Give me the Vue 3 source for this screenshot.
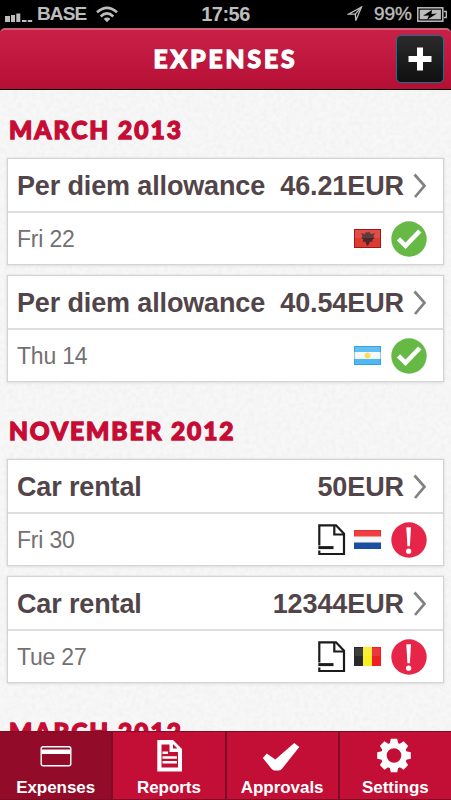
<script setup>
const groups = [
  {
    title: 'MARCH 2013',
    cls: 'march',
    items: [
      { name: 'Per diem allowance', amount: '46.21EUR', date: 'Fri 22', flag: 'al', ok: true },
      { name: 'Per diem allowance', amount: '40.54EUR', date: 'Thu 14', flag: 'ar', ok: true },
    ],
  },
  {
    title: 'NOVEMBER 2012',
    cls: 'november',
    items: [
      { name: 'Car rental', amount: '50EUR', date: 'Fri 30', flag: 'nl', ok: false },
      { name: 'Car rental', amount: '12344EUR', date: 'Tue 27', flag: 'be', ok: false },
    ],
  },
  { title: 'MARCH 2012', cls: 'march', items: [] },
]
const tabs = ['Expenses', 'Reports', 'Approvals', 'Settings']
</script>

<template>
  <div class="screen">
    <div class="status">
      <div class="side">
        <svg class="signal" width="28" height="12" viewBox="0 0 28 12" fill="#bdbdbd">
          <rect x="0" y="5" width="5" height="6" /><rect x="6" y="4" width="4" height="7" />
          <rect x="11.300" y="2.500" width="4" height="8.500" /><rect x="17" y="9" width="4.500" height="2" />
          <rect x="22.700" y="9" width="4.500" height="2" />
        </svg>
        <span class="carrier">BASE</span>
        <svg class="wifi" width="22" height="17" viewBox="0 0 22 17" fill="none" stroke="#bdbdbd" stroke-width="2.700">
          <path d="M1 6.300Q11 -2.700 21 6.300" /><path d="M4.700 10.400Q11 4.500 17.300 10.400" />
          <path d="M7.600 12.800Q11 10 14.400 12.800L11 16.300Z" fill="#bdbdbd" stroke="none" />
        </svg>
      </div>
      <span class="clock">17:56</span>
      <div class="side right">
        <svg class="arrow" width="16" height="16" viewBox="0 0 16 16" fill="none" stroke="#bdbdbd" stroke-width="1.300">
          <path d="M14.500 1L1.500 8.200H8.300L8.800 14.600Z" /><path d="M8.300 8.200L14.500 1" />
        </svg>
        <span class="percent">99%</span>
        <svg class="battery" width="30" height="15" viewBox="0 0 30 15">
          <rect x=".8" y=".8" width="25" height="13.400" fill="none" stroke="#bdbdbd" stroke-width="1.500" />
          <rect x="2.700" y="2.700" width="21.200" height="9.600" fill="#bdbdbd" />
          <path d="M27 4.500H29.300V10.500H27" fill="none" stroke="#bdbdbd" stroke-width="1.300" />
          <path d="M15 3L6 8.800L12 8.500L10 12.700L20 6.500L14.500 7Z" fill="#000" />
        </svg>
      </div>
    </div>

    <header class="header">
      <h1><span>EXPENSES</span></h1>
      <button class="add" aria-label="Add">
        <svg width="24" height="24" viewBox="0 0 24 24"><path d="M9 0.500H15V9H23.500V15H15V23.500H9V15H0.500V9H9Z" fill="#fff" /></svg>
      </button>
    </header>

    <main class="content">
      <svg class="paper" width="451" height="641">
        <filter id="grain" x="0" y="0" width="100%" height="100%">
          <feTurbulence type="fractalNoise" baseFrequency="0.22" numOctaves="2" seed="4" />
          <feColorMatrix values="0 0 0 0 0  0 0 0 0 0  0 0 0 0 0  0.200 0 0 0 -0.060" />
        </filter>
        <rect width="451" height="641" filter="url(#grain)" opacity=".22" />
      </svg>
      <section v-for="(g, gi) in groups" :key="gi" class="group">
        <h2><span :class="g.cls">{{ g.title }}</span></h2>
        <article v-for="(it, i) in g.items" :key="i" class="card">
          <div class="top">
            <span class="name">{{ it.name }}</span>
            <span class="amount">{{ it.amount }}</span>
            <svg class="chev" width="14" height="26" viewBox="0 0 14 26"><path d="M1.500 1.500L11.500 12.800L2 24" fill="none" stroke="#818182" stroke-width="2.700" /></svg>
          </div>
          <div class="bottom">
            <span class="date">{{ it.date }}</span>
            <svg v-if="!it.ok" class="doc" width="28" height="32" viewBox="0 0 28 32" fill="none" stroke="#1c1a1b" stroke-width="2.200">
              <path d="M1.300 21.500V1.300H18L26 9.700V30H1.300V26.500" /><path d="M16.300 1.300V10.500H26" />
              <path d="M0.300 23.600H15.500" stroke-width="3" />
            </svg>
            <svg class="flag" width="27" height="19" viewBox="0 0 27 19">
              <g v-if="it.flag === 'al'">
                <rect width="27" height="19" fill="#df3a31" />
                <path d="M7 4L10 5L12 4L10.500 2.500L13.500 3.500L16.500 2.500L15.500 4.300L18 5L21 4L19.500 7L20.500 9L18 11L19 13L16 12.500L15 15L13.500 17L12 15L11.500 12.500L8.500 13L9.500 10.500L7.500 9L8.500 7Z" fill="#4d2627" />
              </g>
              <g v-else-if="it.flag === 'ar'">
                <rect width="27" height="19" fill="#4fb8f2" /><rect y="6" width="27" height="7" fill="#f5f8fa" />
                <circle cx="13.500" cy="9.500" r="3" fill="#f6df56" />
              </g>
              <g v-else-if="it.flag === 'nl'">
                <rect width="27" height="7" fill="#ee2b2c" /><rect y="6.500" width="27" height="6.500" fill="#f6f6f7" />
                <rect y="12.500" width="27" height="6.500" fill="#1b4da0" />
              </g>
              <g v-else>
                <rect width="9" height="19" fill="#292929" /><rect x="9" width="9" height="19" fill="#f9ee20" />
                <rect x="18" width="9" height="19" fill="#ee2024" />
              </g>
              <rect x="1" y="1" width="25" height="8" fill="#fff" opacity=".1" />
              <rect v-if="it.flag === 'al'" x=".5" y=".5" width="26" height="18" fill="none" stroke="#9b1a16" />
              <rect v-if="it.flag === 'ar'" x=".5" y=".5" width="26" height="18" fill="none" stroke="#1689d0" stroke-opacity=".45" />
            </svg>
            <svg class="state" width="36" height="36" viewBox="0 0 36 36">
              <circle cx="18" cy="18" r="17.700" :fill="it.ok ? '#66b945' : '#e62548'" />
              <path v-if="it.ok" d="M7.500 17.800L14.500 24.800L28.800 10" fill="none" stroke="#fff" stroke-width="4.600" />
              <template v-else>
                <path d="M15.300 5.200H20L18.900 24.300H16.400Z" fill="#fff" /><circle cx="17.650" cy="29.200" r="2.600" fill="#fff" />
              </template>
            </svg>
          </div>
        </article>
      </section>
    </main>

    <nav class="tabs">
      <div v-for="(t, i) in tabs" :key="t" class="tab" :class="{ active: i === 0 }">
        <svg width="40" height="36" viewBox="0 0 40 36">
          <template v-if="i === 0">
            <rect x="5.200" y="8.700" width="29.600" height="19" rx="2" fill="none" stroke="#fff" stroke-width="1.400" />
            <rect x="5.500" y="11.500" width="29" height="4.500" fill="#fff" />
          </template>
          <template v-else-if="i === 1">
            <path d="M8.300 2H24L33 11V33.500H8.300Z" fill="#fff" />
            <path d="M12.500 6.500H20.500V14H29V29.500H12.500Z" fill="#c30f35" />
            <path d="M13.500 14.800H19M13.500 19.500H28M13.500 24.300H28" stroke="#fff" stroke-width="2.500" />
            <path d="M24 6V10.500H28.500Z" fill="#c30f35" />
          </template>
          <path v-else-if="i === 2" d="M1.500 20.500L5.500 16L14 22L33 5.500L38 9.500L20.500 31.500Q19 33 17 33H13Q11 32.500 10 31Z" transform="translate(-.7 -.5)" fill="#fff" />
          <g v-else transform="translate(19 17.500)">
            <circle r="10.200" fill="none" stroke="#fff" stroke-width="5.800" />
            <path v-for="n in 8" :key="n" d="M-4.200 -12L-3.200 -16.800H3.200L4.200 -12Z" fill="#fff" :transform="`rotate(${n * 45})`" />
          </g>
        </svg>
        <span>{{ t }}</span>
      </div>
    </nav>
  </div>
</template>

<style>
body { margin: 0; background: #000; overflow: hidden; }
</style>

<style scoped>
* { box-sizing: border-box; }
svg { display: block; flex: none; }
.screen { width: 451px; height: 800px; display: flex; flex-direction: column; overflow: hidden; background: #000; font-family: "Liberation Sans", Arial, sans-serif; }
.status { height: 28px; flex: none; display: grid; grid-template-columns: 1fr auto 1fr; align-items: center; color: #bdbdbd; font-weight: bold; font-size: 20px; line-height: 28px; }
.side { display: flex; align-items: center; padding-left: 5px; }
.side.right { justify-content: flex-end; padding: 0 4px 0 0; }
.signal { margin-top: 6px; }
.carrier { margin-left: 4px; font-size: 19px; letter-spacing: -.9px; }
.wifi { margin-left: 10px; }
.clock { letter-spacing: -.5px; }
.arrow { margin-right: 11px; }
.percent { font-size: 19px; font-weight: normal; -webkit-text-stroke: .4px #bdbdbd; margin-right: 5px; }
.header { height: 62px; flex: none; position: relative; display: flex; align-items: center; justify-content: center; background: linear-gradient(#c92048, #b60f35); border-top: 2px solid #cf6076; border-bottom: 1px solid #000; border-radius: 5px 5px 0 0; }
h1, h2 { margin: 0; font-family: Lato, sans-serif; font-weight: 900; }
h1 { color: #fff; font-size: 24.5px; line-height: 30px; padding-bottom: 1px; letter-spacing: 3px; -webkit-text-stroke: 1.3px #fff; text-shadow: 0 1px 1px #7e0824; }
.add { position: absolute; right: 7px; top: 5px; width: 48px; height: 48px; padding: 0; display: flex; align-items: center; justify-content: center; border: 1.500px solid #0c7792; border-radius: 5px; background: linear-gradient(#2b2b2b, #101010); }
.content { flex: 1; min-height: 0; position: relative; overflow: hidden; background: #f7f7f7; padding: 24px 7px 0; }
.paper { position: absolute; left: 0; top: 0; }
.group { position: relative; display: flex; flex-direction: column; gap: 10px; margin-bottom: 33px; }
h2 { height: 34px; line-height: 32px; padding-left: 2px; color: #c60c35; font-size: 24.5px; -webkit-text-stroke: 1.3px #c60c35; }
.march { letter-spacing: 2px; }
.november { letter-spacing: 1.9px; }
.card { height: 107px; background: #fff; border: 1px solid #d4d4d4; box-shadow: 0 0 0 .5px #e2e2e2, 0 1px 3px rgba(0, 0, 0, .09); display: flex; flex-direction: column; }
.top { height: 54px; flex: none; display: flex; align-items: center; border-bottom: 2px solid #dedede; padding: 2px 16px 0 9px; color: #52454a; font-size: 27px; font-weight: bold; }
.name { letter-spacing: -.14px; }
.amount { margin-left: auto; letter-spacing: -.1px; }
.chev { margin-left: 9px; }
.bottom { flex: 1; display: flex; align-items: center; padding: 0 16px 0 9px; color: #747071; font-size: 23px; }
.date { margin-right: auto; padding-top: 1px; letter-spacing: -.2px; }
.doc { margin-right: 8px; }
.flag { margin-right: 10px; }
.tabs { height: 69px; flex: none; display: grid; grid-template-columns: repeat(4, 1fr); background: #7d0c26; gap: 2px; padding: 1px 0; }
.tab { background: #c30f35; display: flex; flex-direction: column; align-items: center; padding-top: 6px; color: #fff; font-size: 17px; font-weight: bold; line-height: 20px; gap: 4px; letter-spacing: -.05px; }
.tab.active { background: #920b28; }
</style>
